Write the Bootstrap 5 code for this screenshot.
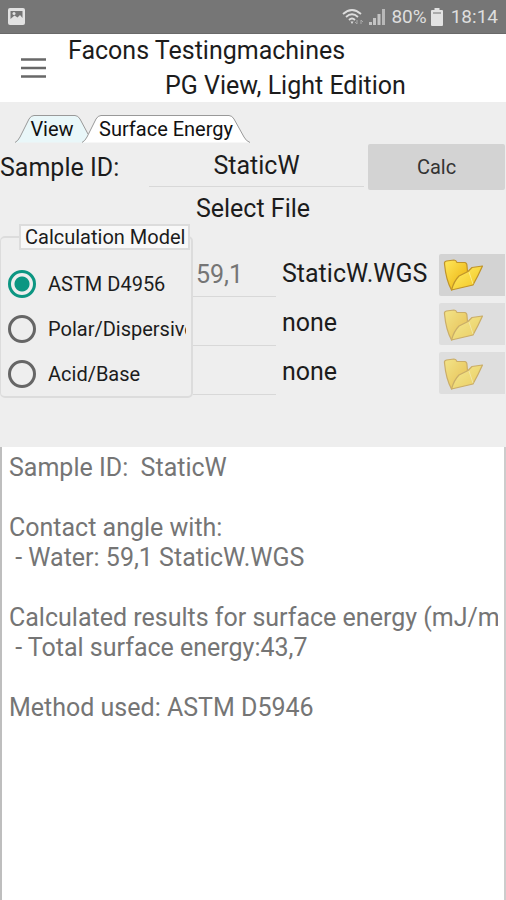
<!DOCTYPE html>
<html lang="en">
<head>
<meta charset="utf-8">
<meta name="viewport" content="width=device-width, initial-scale=1">
<title>PG View, Light Edition</title>
<link rel="stylesheet" href="https://cdn.jsdelivr.net/npm/bootstrap@5.3.0/dist/css/bootstrap.min.css">
<style>
  body { font-family: Roboto, "Liberation Sans", sans-serif; font-size: 25px; line-height: 30px; color: #1c1c1c; background: #eee; }
  .status-bar { height: 34px; background: #767676; color: #dedede; font-size: 19px; border-bottom: 1px solid #696969; }
  .app-bar { height: 68px; }
  .menu-btn { width: 68px; }
  .app-title { font-size: 25px; line-height: 35px; }
  .app-title .line-two { padding-left: 97px; }
  .tab-strip { height: 42px; padding: 13px 0 1px 15px; font-size: 20px; }
  .tab-btn { position: relative; height: 28px; padding: 0; border: 0; background: none; color: #111; line-height: 28px; }
  .tab-btn svg { position: absolute; inset: 0; width: 100%; height: 100%; }
  .tab-btn span { position: relative; }
  .tab-view { width: 74px; }
  .tab-energy { width: 168px; margin-left: -7px; }
  .sample-row { display: grid; grid-template-columns: 149px 1fr 137px; height: 46px; padding-right: 1px; }
  .line-input { border: 0; border-bottom: 1px solid #d8d8d8; background: transparent; color: inherit; min-width: 0; border-radius: 0; padding: 2px 0 0; outline: 0; }
  .sample-row .line-input { margin: 0 4px 3px 0; }
  .sample-row label { padding-top: 2px; }
  .calc-btn { font-size: 20px; background: #d3d3d3; color: #333; border: 0; border-radius: 2px; }
  .file-title { height: 34px; line-height: 38px; }
  .model-area { display: grid; grid-template-columns: 193px 1fr; height: 223px; align-items: start; }
  .model-box { height: 174px; border: 2px solid #dcdcdc; border-left-width: 1px; border-radius: 5px; padding: 0 1px 0 7px; font-size: 20px; }
  .model-box legend { float: none; width: 171px; height: 26px; margin: 0 0 11px 11px; padding: 0 0 0 4px; font-size: 20px; line-height: 22px; background: #f8f8f8; border: 2px solid #dcdcdc; white-space: nowrap; }
  .model-option { display: flex; align-items: center; height: 45px; margin-right: 4px; overflow: hidden; white-space: nowrap; }
  .model-option input { appearance: none; flex: none; width: 28px; height: 28px; margin: 0 12px 0 0; border: 3px solid #666; border-radius: 50%; }
  .model-option input:checked { border-color: #0c9682; background: radial-gradient(circle, #0c9682 7px, transparent 8px); }
  .file-list { padding-top: 24px; }
  .file-row { display: grid; grid-template-columns: 83px 1fr 66px; column-gap: 6px; height: 49px; padding-right: 1px; }
  .file-row .line-input { color: #757575; padding: 6px 0 0 3px; }
  .file-row span { align-self: center; padding-top: 3px; }
  .file-btn { height: 42px; margin-top: 4px; padding: 0 0 0 3px; border: 0; border-radius: 2px 0 0 2px; background: #d3d3d3; text-align: left; line-height: 0; align-self: center; }
  .file-btn:disabled { background: #dedede; padding-top: 3px; }
  .file-btn:disabled svg { opacity: .65; }
  .report { border-left: 2px solid #bebebe; border-right: 2px solid #ccc; padding: 6px 6px 0 7px; }
  .report textarea { border: 0; padding: 0; resize: none; overflow: hidden; white-space: pre; color: #757575; background: transparent; outline: 0; }
</style>
<script src="https://cdn.jsdelivr.net/npm/bootstrap@5.3.0/dist/js/bootstrap.bundle.min.js"></script>
</head>
<body class="d-flex flex-column min-vh-100 overflow-hidden">
<svg class="position-absolute" width="0" height="0" aria-hidden="true">
  <defs>
    <linearGradient id="back" x1="0" y1="0" x2="1" y2="1"><stop offset="0" stop-color="#ffe85c"/><stop offset="1" stop-color="#eaae08"/></linearGradient>
    <linearGradient id="front" x1="0" y1="0" x2="1" y2="1"><stop offset="0" stop-color="#fff06c"/><stop offset="1" stop-color="#f2c21c"/></linearGradient>
  </defs>
  <symbol id="folder" viewBox="0 0 42 34">
    <path d="M9.500 32 Q4 22 2.500 6 Q2 3.500 4.500 3 L12 2 Q14 2 15 4.500 L23 4.500 Q25 5 25 8 L25.500 14 L20 26Z" fill="url(#back)" stroke="#c0942a" stroke-width="1.200"/>
    <path d="M9.500 32 Q12 23 17 18 L26 13.500 L30 9.500 L40.500 8 Q36 18 31 27 Z" fill="url(#front)" stroke="#c0942a" stroke-width="1.200" stroke-linejoin="round"/>
    <path d="M27 14 L31 26" stroke="#fff9b8" stroke-width="1" opacity=".6"/>
  </symbol>
</svg>

<div class="status-bar d-flex align-items-center flex-shrink-0 px-2">
  <svg width="17" height="17" viewBox="0 0 17 17" aria-label="Picture"><rect width="17" height="17" rx="2" fill="#e2e2e2"/><path d="M2.500 3H14.500V10L12 7L9.500 9.500L6.500 7.500L2.500 11Z" fill="#767676"/><circle cx="6" cy="5.500" r="1.500" fill="#e2e2e2"/></svg>
  <svg class="ms-auto" width="45" height="20" viewBox="0 0 45 20" fill="none" aria-label="Signal">
    <g stroke="#dedede" stroke-width="1.800"><path d="M1 7Q10 -1 19 7"/><path d="M4 10Q10 4.500 16 10"/><path d="M7 13Q10 10 13 13"/></g>
    <path d="M8.500 14.500H11.500L10 17Z" fill="#dedede"/>
    <path d="M15 13v4l-2-2M19 17v-4l2 2" stroke="#aaa"/>
    <path d="M27 15h3v3h-3zM31 11h3v7h-3zM35.500 7h3v11h-3z" fill="#c4c4c4"/><path d="M40 2h3v16h-3z" fill="#b8b8b8"/>
  </svg>
  <span class="ms-1">80%</span>
  <svg class="ms-1 me-2" width="12" height="18" viewBox="0 0 12 18" aria-label="Battery"><path d="M3.500 0h5v2H11q1 0 1 1v14q0 1-1 1H1q-1 0-1-1V3q0-1 1-1h2.500z" fill="#e2e2e2"/><path d="M2 4h8v2H2z" fill="#aaa"/></svg>
  <span>18:14</span>
</div>

<header class="app-bar d-flex align-items-center bg-white flex-shrink-0">
  <button class="menu-btn btn border-0 p-0 ps-3 text-start d-flex" type="button" aria-label="Menu">
    <svg class="ms-1" width="27" height="22" viewBox="0 0 27 22"><path d="M1 2.500H26M1 11H26M1 19.500H26" stroke="#686868" stroke-width="2.500"/></svg>
  </button>
  <h1 class="app-title m-0 fw-normal"><span class="d-block">Facons Testingmachines</span><span class="line-two d-block">PG View, Light Edition</span></h1>
</header>

<nav class="tab-strip d-flex flex-shrink-0" aria-label="Pages">
  <button class="tab-btn tab-view" type="button"><svg viewBox="0 0 74 28" preserveAspectRatio="none"><path d="M0 27.500Q3 26 5 22L14 4Q16 .500 19 .500H60Q63 .500 65 4L74 22V27.500Z" fill="#e9f7f9"/><path d="M0 27.500Q3 26 5 22L14 4Q16 .500 19 .500H60Q63 .500 65 4L73 19" fill="none" stroke="#999"/></svg><span>View</span></button>
  <button class="tab-btn tab-energy" type="button"><svg viewBox="0 0 168 28" preserveAspectRatio="none"><path d="M0 27.500Q3 26 5 22L14 4Q16 .500 19 .500H147Q150 .500 152 4L162 22Q164 26 168 27.500" fill="#fff" stroke="#999"/></svg><span>Surface Energy</span></button>
</nav>

<main class="flex-grow-1 d-flex flex-column">
  <div class="sample-row flex-shrink-0">
    <label for="sample" class="align-self-center">Sample ID:</label>
    <input id="sample" class="line-input text-center" value="StaticW">
    <button class="calc-btn" type="button">Calc</button>
  </div>
  <div class="file-title text-center flex-shrink-0">Select File</div>
  <div class="model-area flex-shrink-0">
    <fieldset class="model-box">
      <legend>Calculation Model</legend>
      <label class="model-option"><input type="radio" name="model" checked>ASTM D4956</label>
      <label class="model-option"><input type="radio" name="model">Polar/Dispersive</label>
      <label class="model-option"><input type="radio" name="model">Acid/Base</label>
    </fieldset>
    <div class="file-list">
      <div class="file-row">
        <input class="line-input" value="59,1" aria-label="Angle 1"><span>StaticW.WGS</span>
        <button class="file-btn" type="button" aria-label="Open file 1"><svg width="42" height="34"><use href="#folder"/></svg></button>
      </div>
      <div class="file-row">
        <input class="line-input" value="" aria-label="Angle 2"><span>none</span>
        <button class="file-btn" type="button" aria-label="Open file 2" disabled><svg width="42" height="34"><use href="#folder"/></svg></button>
      </div>
      <div class="file-row">
        <input class="line-input" value="" aria-label="Angle 3"><span>none</span>
        <button class="file-btn" type="button" aria-label="Open file 3" disabled><svg width="42" height="34"><use href="#folder"/></svg></button>
      </div>
    </div>
  </div>
  <div class="report bg-white flex-grow-1 d-flex">
    <textarea class="w-100" wrap="off" aria-label="Results" readonly>Sample ID:  StaticW

Contact angle with:
 - Water: 59,1 StaticW.WGS

Calculated results for surface energy (mJ/m²):
 - Total surface energy:43,7

Method used: ASTM D5946</textarea>
  </div>
</main>
</body>
</html>
